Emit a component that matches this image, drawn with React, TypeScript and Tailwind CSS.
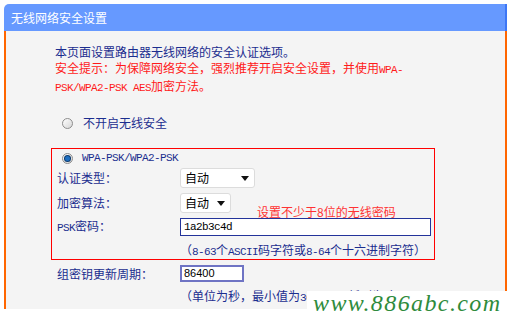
const Radio = ({ checked }: { checked?: boolean }) => (
  <span className="flex h-[11px] w-[11px] items-center justify-center rounded-full border border-[#8d8d8d] bg-gradient-to-br from-white to-[#d6d6d6]">
    {checked && <span className="h-[5px] w-[5px] rounded-full bg-[#1f6fc0] ring-1 ring-[#0b3a6e]" />}
  </span>
);

const Select = ({ width }: { width: string }) => (
  <div className={`flex h-[20px] ${width} items-center justify-between rounded-[3px] border border-[#dcdcdc] bg-white pl-[4px] pr-[5px]`}>
    <span className="text-[12px] text-black">自动</span>
    <svg width="8" height="5" viewBox="0 0 8 5">
      <path d="M0 0 L8 0 L4 5 Z" fill="#111" />
    </svg>
  </div>
);

const Mono = ({ children }: { children: string }) => (
  <span className="font-['Liberation_Mono',monospace] text-[11px] tracking-[-0.6px]">{children}</span>
);

export default function App() {
  return (
    <div className="relative h-[314px] w-[510px] overflow-hidden bg-white pl-[4px] pt-[4px] font-['Noto_Sans_CJK_SC',sans-serif] text-[12px] text-[#1b2d8f]">
      <div className="w-[503px]">
        <div className="h-[27px] rounded-tl-[5px] border-r-2 border-[#3d77f5] bg-[#6699ff] pl-[7px] leading-[27px] text-white">
          无线网络安全设置
        </div>
        <div className="h-[278px] border-x-2 border-[#ff6600] bg-[#f4f4f4] pl-[45px] pt-[13px]">
          <div className="ml-[4px] whitespace-nowrap leading-[16px]">
            <div>本页面设置路由器无线网络的安全认证选项。</div>
            <div className="text-[#ff1a1a]">
              安全提示：为保障网络安全，强烈推荐开启安全设置，并使用<Mono>WPA-</Mono>
            </div>
            <div className="text-[#ff1a1a]">
              <Mono>PSK/WPA2-PSK AES</Mono>加密方法。
            </div>
          </div>

          <div className="ml-[11px] mt-[19px] flex h-[16px] items-center gap-[10px]">
            <Radio />
            <span>不开启无线安全</span>
          </div>

          <div className="relative mt-[17px] h-[112px] w-[384px] border border-[#ff0000]">
            <div className="ml-[10px] mt-[1px] flex h-[16px] items-center gap-[9px]">
              <Radio checked />
              <Mono>WPA-PSK/WPA2-PSK</Mono>
            </div>
            <div className="ml-[5px] mt-[2px] flex h-[20px] items-center">
              <span className="w-[123px]">认证类型：</span>
              <Select width="w-[75px]" />
            </div>
            <div className="ml-[5px] mt-[5px] flex h-[20px] items-center">
              <span className="w-[123px]">加密算法：</span>
              <Select width="w-[51px]" />
            </div>
            <div className="ml-[5px] mt-[5px] flex h-[18px] items-center">
              <span className="w-[123px]">
                <Mono>PSK</Mono>密码：
              </span>
              <div className="flex h-[18px] w-[251px] items-center border border-[#23339a] bg-white pl-[3px] text-black">
                <Mono>1a2b3c4d</Mono>
              </div>
            </div>
            <div className="ml-[128px] mt-[6px] whitespace-nowrap leading-[16px]">
              （<Mono>8-63</Mono>个<Mono>ASCII</Mono>码字符或<Mono>8-64</Mono>个十六进制字符）
            </div>
            <div className="absolute left-[205px] top-[55px] whitespace-nowrap leading-[16px] text-[#ff3333]">
              设置不少于8位的无线密码
            </div>
          </div>

          <div className="ml-[6px] mt-[5px] flex h-[17px] items-center">
            <span className="w-[123px]">组密钥更新周期：</span>
            <div className="flex h-[17px] w-[64px] items-center border-2 border-[#6f74c4] bg-white pl-[2px] font-['Liberation_Sans',sans-serif] text-[11px] text-black">
              86400
            </div>
          </div>
          <div className="ml-[129px] mt-[6px] whitespace-nowrap leading-[16px]">
            （单位为秒，最小值为<Mono>30</Mono>，不更新则为<Mono>0</Mono>）
          </div>
        </div>
      </div>

      <div className="absolute left-[307px] top-[291px] flex h-[23px] w-[203px] items-center bg-white pl-[6px] font-['Liberation_Serif',serif] text-[24px] italic leading-none tracking-[1.4px] text-[#2e8b3c]">
        www.886abc.com
      </div>
    </div>
  );
}
